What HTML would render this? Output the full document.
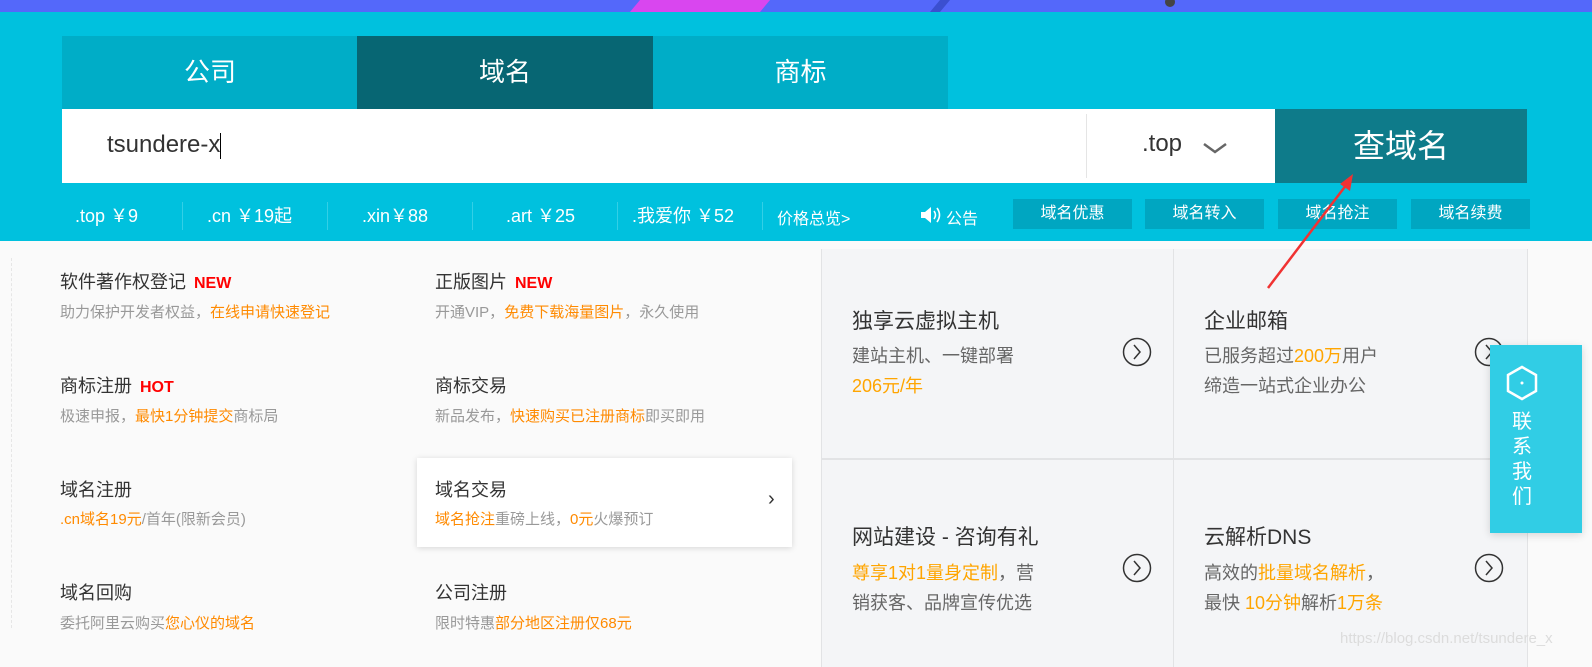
<!DOCTYPE html>
<html><head><meta charset="utf-8"><style>
*{margin:0;padding:0;box-sizing:border-box}
body{width:1592px;height:667px;overflow:hidden;position:relative;background:#fafafa;font-family:"Liberation Sans","Noto Sans CJK SC",sans-serif}
.a{position:absolute;white-space:nowrap}
.top{left:0;top:0;width:1592px;height:12px;background:#5468fa}
.cy{left:0;top:12px;width:1592px;height:229px;background:#00c1de}
.tab{top:36px;height:73px;width:296px;color:#fff;font-size:26px;text-align:center;line-height:73px;background:#00adc7}
.btn{top:199px;height:30px;width:119px;background:#00a6c1;color:#fff;font-size:16px;text-align:center;line-height:30px}
.pr{top:202px;color:#fff;font-size:18px}
.dv{top:202px;width:1px;height:28px;background:#33cfe6}
.t{font-size:18px;color:#333}
.s{font-size:15px;color:#999}
.o{color:#ff8a00}
.tag{color:#f00;font-weight:bold;font-size:16px;margin-left:8px}
.cell{background:#f4f5f7;width:351px}
.ct{font-size:21px;color:#333}
.cs{font-size:18px;color:#666;line-height:30px}
.circ{width:28px;height:28px;border:1.5px solid #333;border-radius:50%}
</style></head><body>
<div class="a top"></div>
<svg class="a" style="left:620px;top:0" width="560" height="12"><polygon points="10,12 20,0 150,0 140,12" fill="#d946ef"/><polygon points="310,12 320,0 330,0 320,12" fill="#3b4fd0"/><circle cx="550" cy="2" r="5" fill="#444"/></svg>
<div class="a cy"></div>
<div class="a tab" style="left:62px">公司</div>
<div class="a tab" style="left:357px;background:#076673">域名</div>
<div class="a tab" style="left:653px;width:295px">商标</div>
<div class="a" style="left:62px;top:109px;width:1213px;height:74px;background:#fff"></div>
<div class="a" style="left:107px;top:131px;font-size:24px;color:#333">tsundere-x<span style="display:inline-block;width:1px;height:26px;background:#000;vertical-align:middle"></span></div>
<div class="a" style="left:1086px;top:114px;width:1px;height:64px;background:#e5e5e5"></div>
<div class="a" style="left:1142px;top:130px;font-size:24px;color:#333">.top</div>
<svg class="a" style="left:1202px;top:141px" width="26" height="14"><path d="M2 3 L13 11 L24 3" stroke="#666" stroke-width="2.5" fill="none"/></svg>
<div class="a" style="left:1275px;top:109px;width:252px;height:74px;background:#0e7b8a;color:#fff;font-size:32px;text-align:center;line-height:74px">查域名</div>
<div class="a pr" style="left:75px">.top ￥9</div><div class="a dv" style="left:182px"></div>
<div class="a pr" style="left:207px">.cn ￥19起</div><div class="a dv" style="left:327px"></div>
<div class="a pr" style="left:362px">.xin￥88</div><div class="a dv" style="left:472px"></div>
<div class="a pr" style="left:506px">.art ￥25</div><div class="a dv" style="left:617px"></div>
<div class="a pr" style="left:632px">.我爱你 ￥52</div><div class="a dv" style="left:762px"></div>
<div class="a pr" style="left:777px;font-size:16px;top:205px">价格总览&gt;</div>
<svg class="a" style="left:920px;top:205px" width="22" height="20"><path d="M1 7h4l6-5v16l-6-5H1z" fill="#fff"/><path d="M14 6q3 4 0 8M17 3q5 7 0 14" stroke="#fff" stroke-width="1.6" fill="none"/></svg>
<div class="a" style="left:946px;top:205px;color:#fff;font-size:16px">公告</div>
<div class="a btn" style="left:1013px">域名优惠</div>
<div class="a btn" style="left:1145px">域名转入</div>
<div class="a btn" style="left:1278px">域名抢注</div>
<div class="a btn" style="left:1411px">域名续费</div>
<div class="a" style="left:11px;top:258px;width:0;height:370px;border-left:1px dashed #e6e6e6"></div>
<div class="a" style="left:417px;top:458px;width:375px;height:89px;background:#fff;box-shadow:0 1px 6px rgba(0,0,0,.15)"></div>
<div class="a" style="left:768px;top:488px;font-size:20px;color:#333">›</div>
<div class="a t" style="left:60px;top:268px">软件著作权登记<span class="tag">NEW</span></div>
<div class="a s" style="left:60px;top:301px">助力保护开发者权益，<span class="o">在线申请快速登记</span></div>
<div class="a t" style="left:435px;top:268px">正版图片<span class="tag">NEW</span></div>
<div class="a s" style="left:435px;top:301px">开通VIP，<span class="o">免费下载海量图片</span>，永久使用</div>
<div class="a t" style="left:60px;top:372px">商标注册<span class="tag">HOT</span></div>
<div class="a s" style="left:60px;top:405px">极速申报，<span class="o">最快1分钟提交</span>商标局</div>
<div class="a t" style="left:435px;top:372px">商标交易</div>
<div class="a s" style="left:435px;top:405px">新品发布，<span class="o">快速购买已注册商标</span>即买即用</div>
<div class="a t" style="left:60px;top:476px">域名注册</div>
<div class="a s" style="left:60px;top:508px"><span class="o">.cn域名19元</span>/首年(限新会员)</div>
<div class="a t" style="left:435px;top:476px">域名交易</div>
<div class="a s" style="left:435px;top:508px"><span class="o">域名抢注</span>重磅上线，<span class="o">0元</span>火爆预订</div>
<div class="a t" style="left:60px;top:579px">域名回购</div>
<div class="a s" style="left:60px;top:612px">委托阿里云购买<span class="o">您心仪的域名</span></div>
<div class="a t" style="left:435px;top:579px">公司注册</div>
<div class="a s" style="left:435px;top:612px">限时特惠<span class="o">部分地区注册仅68元</span></div>
<div class="a" style="left:821px;top:241px;width:707px;height:426px;background:#e2e3e5"></div>
<div class="a cell" style="left:822px;top:249px;height:209px"></div>
<div class="a cell" style="left:1174px;top:249px;height:209px;width:353px"></div>
<div class="a cell" style="left:822px;top:460px;height:207px"></div>
<div class="a cell" style="left:1174px;top:460px;height:207px;width:353px"></div>
<div class="a" style="left:821px;top:241px;width:771px;height:8px;background:#fafafa"></div>
<div class="a ct" style="left:852px;top:305px">独享云虚拟主机</div>
<div class="a cs" style="left:852px;top:341px">建站主机、一键部署<br><span class="o" style="color:#ffa500">206元/年</span></div>
<div class="a ct" style="left:1204px;top:305px">企业邮箱</div>
<div class="a cs" style="left:1204px;top:341px">已服务超过<span style="color:#ffa500">200万</span>用户<br>缔造一站式企业办公</div>
<div class="a ct" style="left:852px;top:521px">网站建设 - 咨询有礼</div>
<div class="a cs" style="left:852px;top:558px"><span style="color:#ffa500">尊享1对1量身定制</span>，营<br>销获客、品牌宣传优选</div>
<div class="a ct" style="left:1204px;top:521px">云解析DNS</div>
<div class="a cs" style="left:1204px;top:558px">高效的<span style="color:#ffa500">批量域名解析</span>，<br>最快 <span style="color:#ffa500">10分钟</span>解析<span style="color:#ffa500">1万条</span></div>
<svg class="a" style="left:1121px;top:336px" width="32" height="32"><circle cx="16" cy="16" r="13.5" stroke="#333" stroke-width="1.5" fill="none"/><path d="M13 9l6 7-6 7" stroke="#333" stroke-width="1.5" fill="none"/></svg>
<svg class="a" style="left:1473px;top:336px" width="32" height="32"><circle cx="16" cy="16" r="13.5" stroke="#333" stroke-width="1.5" fill="none"/><path d="M13 9l6 7-6 7" stroke="#333" stroke-width="1.5" fill="none"/></svg>
<svg class="a" style="left:1121px;top:552px" width="32" height="32"><circle cx="16" cy="16" r="13.5" stroke="#333" stroke-width="1.5" fill="none"/><path d="M13 9l6 7-6 7" stroke="#333" stroke-width="1.5" fill="none"/></svg>
<svg class="a" style="left:1473px;top:552px" width="32" height="32"><circle cx="16" cy="16" r="13.5" stroke="#333" stroke-width="1.5" fill="none"/><path d="M13 9l6 7-6 7" stroke="#333" stroke-width="1.5" fill="none"/></svg>
<div class="a" style="left:1490px;top:345px;width:92px;height:188px;background:#31cde5;box-shadow:0 2px 8px rgba(0,0,0,.15)"></div>
<svg class="a" style="left:1504px;top:365px" width="36" height="36"><polygon points="18,2 32,10 32,26 18,34 4,26 4,10" stroke="#fff" stroke-width="2.5" fill="none"/><circle cx="18" cy="18" r="1.5" fill="#fff"/></svg>
<div class="a" style="left:1512px;top:410px;width:22px;color:#fff;font-size:20px;line-height:25px;white-space:normal">联系我们</div>
<svg class="a" style="left:1260px;top:170px" width="100" height="125"><path d="M8 118 L90 10" stroke="#f03232" stroke-width="2.5"/><polygon points="93,4 80,14 90,21" fill="#f03232"/></svg>
<div class="a" style="left:1340px;top:630px;font-size:15px;color:#dcdcdc">https://blog.csdn.net/tsundere_x</div>
</body></html>
